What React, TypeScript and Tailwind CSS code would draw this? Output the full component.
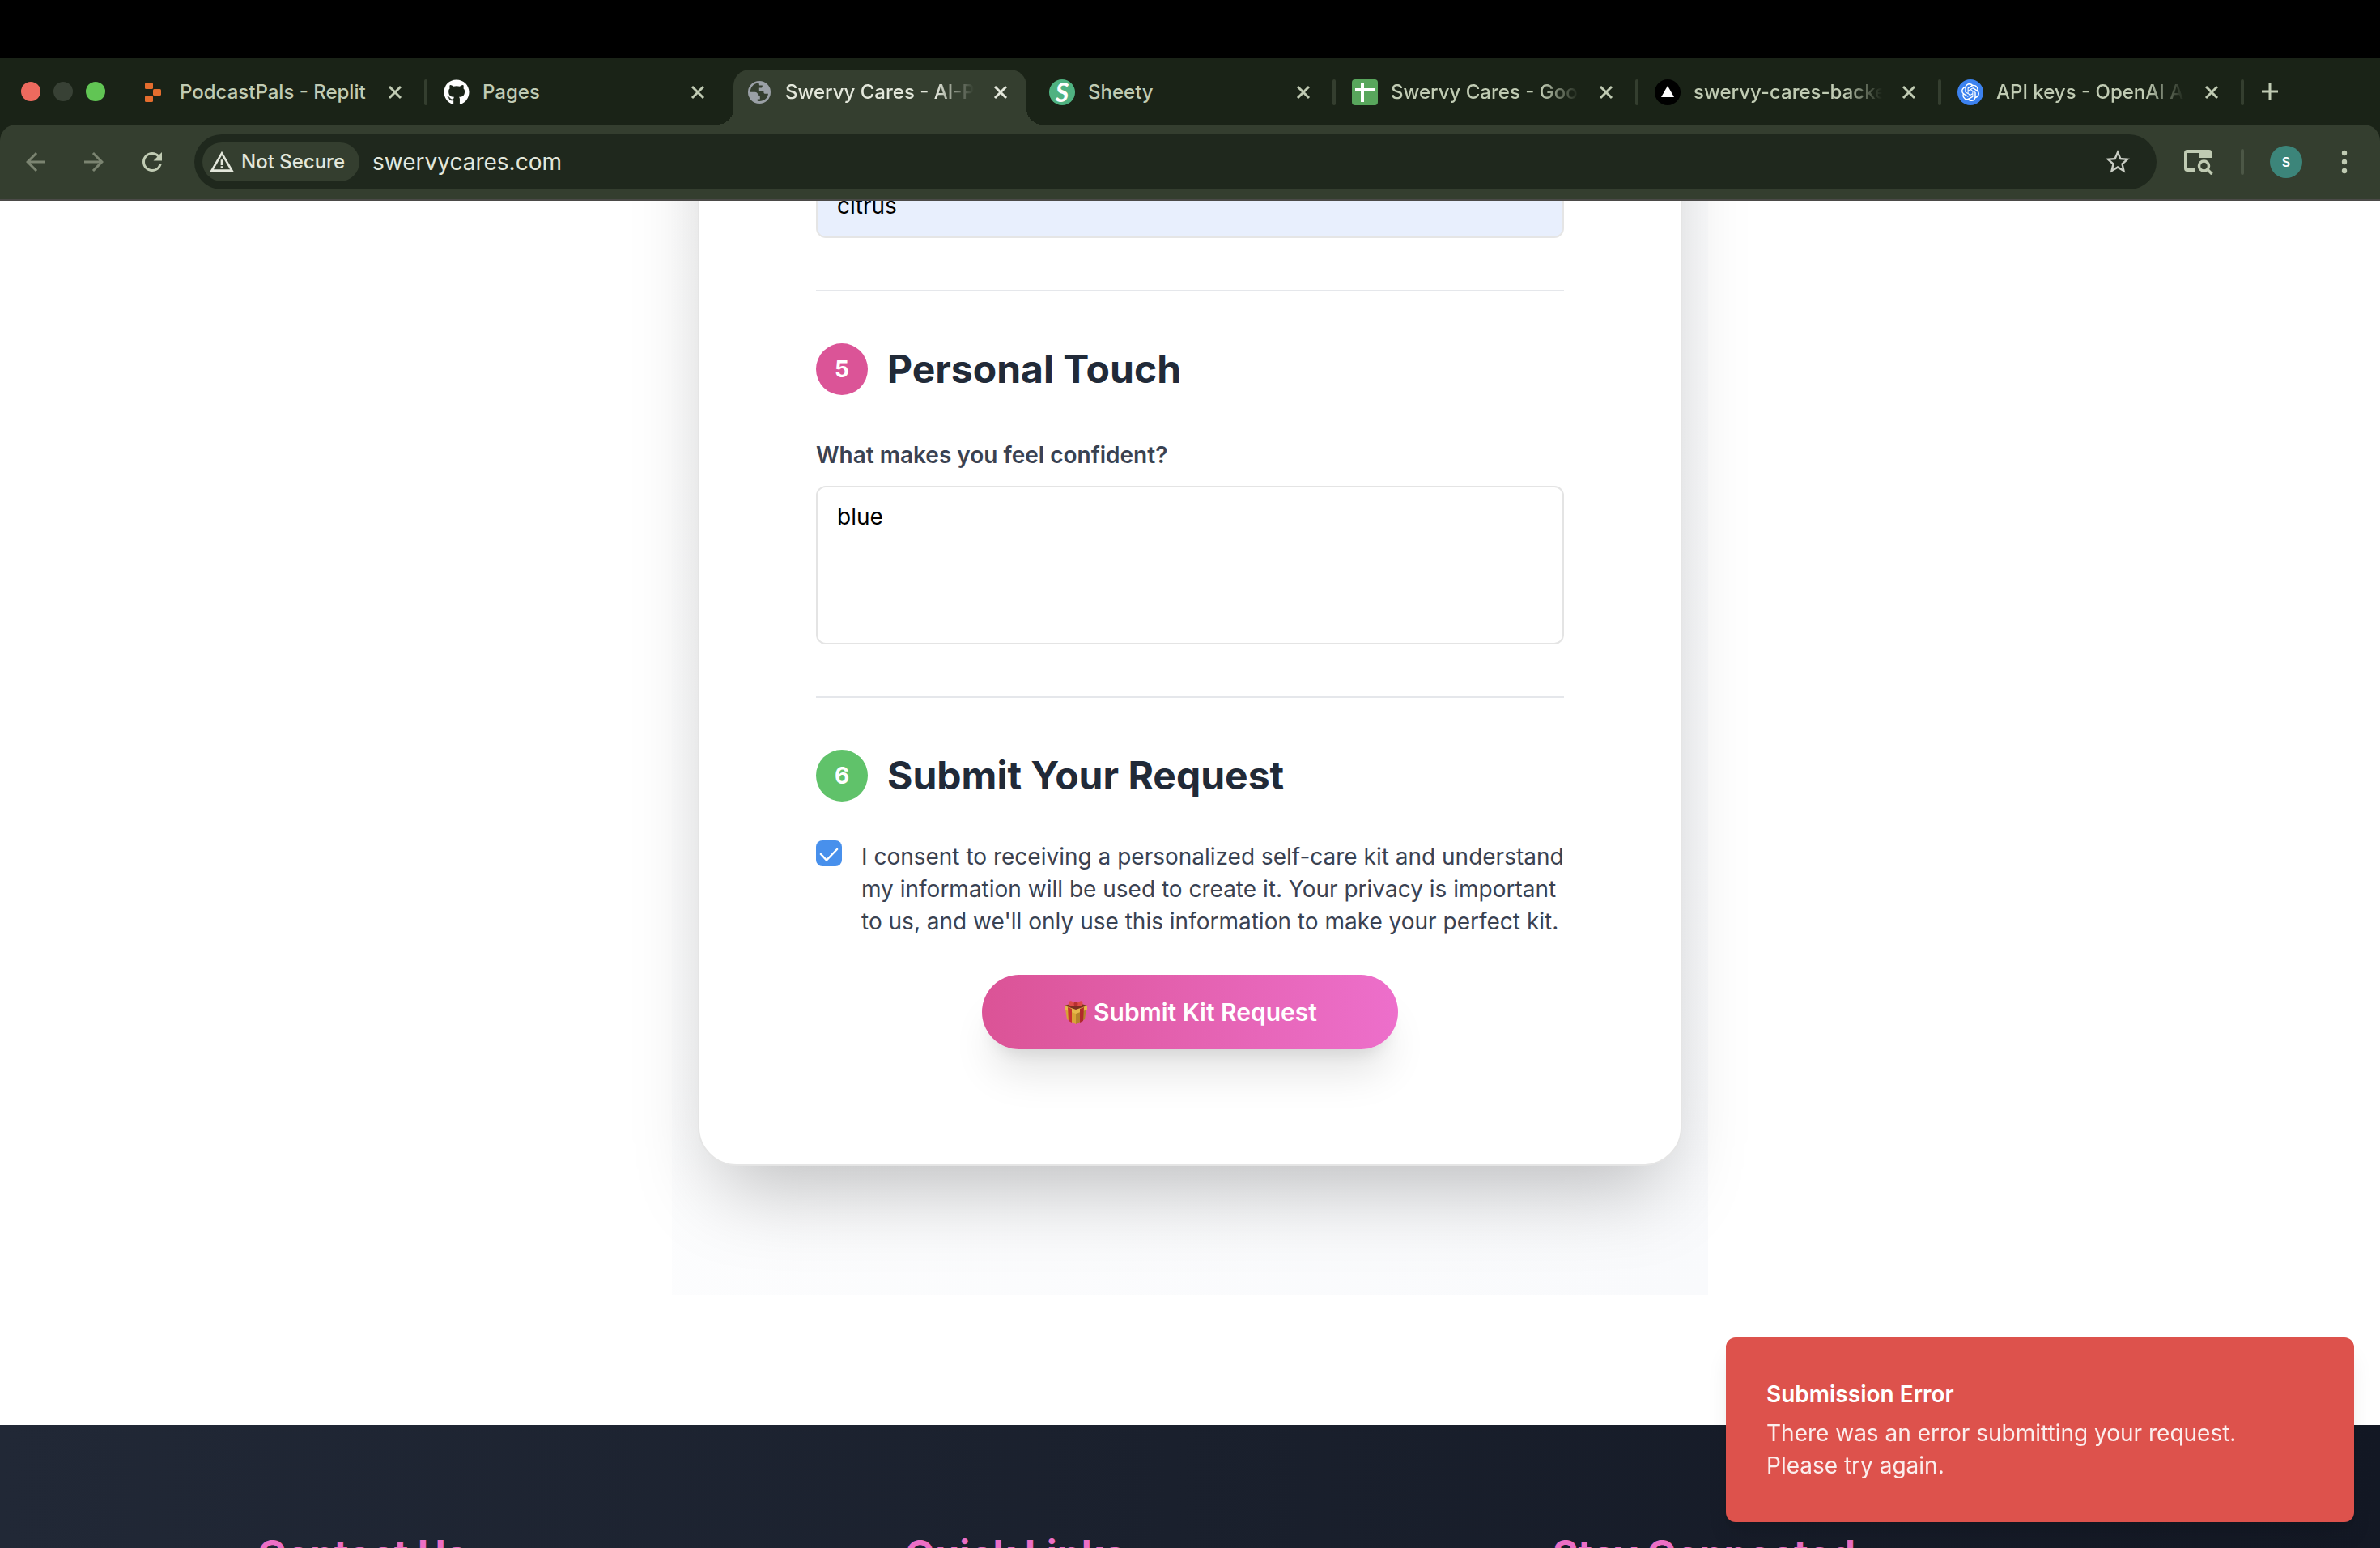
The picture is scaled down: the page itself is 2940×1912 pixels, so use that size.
import type { ReactNode } from 'react';
import { FaGithub } from 'react-icons/fa';
import { SiOpenai } from 'react-icons/si';
import {
  MdArrowBack,
  MdArrowForward,
  MdRefresh,
  MdStarBorder,
  MdWarningAmber,
} from 'react-icons/md';

function ReplitIcon() {
  return (
    <svg viewBox="0 0 32 32" className="size-8" aria-hidden="true">
      <rect x="5" y="4" width="10" height="8" rx="1.5" fill="#e46d2e" />
      <rect x="15" y="12" width="10" height="8" rx="1.5" fill="#e46d2e" />
      <rect x="5" y="20" width="10" height="8" rx="1.5" fill="#e46d2e" />
    </svg>
  );
}

function GlobeIcon() {
  return (
    <svg viewBox="0 0 32 32" className="size-8" aria-hidden="true">
      <circle cx="16" cy="16" r="14" fill="#9aa0a6" />
      <path
        d="M14.500 4.600C8.600 5.400 5 10 4.800 15.800h5.600c2.600 0 3.800 1.200 3.800 3.400v1.600h2.600v3.600h-3v2.400c6.400 1.200 12.400-2.600 13.200-9h-3.400c-1.600 0-2.200-.6-2.200-2v-1.200h-6.600v-4h3.200c1.200 0 1.800-.8 1.800-1.800V7.400h-4.800z"
        fill="#343e2f"
      />
    </svg>
  );
}

function SheetyIcon() {
  return (
    <span className="flex size-8 items-center justify-center rounded-full bg-[#4fb281] font-['Lato',sans-serif] text-[32px] leading-8 font-bold text-white italic">
      S
    </span>
  );
}

function SheetsIcon() {
  return (
    <svg viewBox="0 0 32 32" className="size-8" aria-hidden="true">
      <rect width="32" height="32" rx="4" fill="#58a65c" />
      <path d="M11 4h4v24h-4zM4 11h24v4H4z" fill="#fff" />
    </svg>
  );
}

function VercelIcon() {
  return (
    <svg viewBox="0 0 32 32" className="size-8" aria-hidden="true">
      <circle cx="16" cy="16" r="16" fill="#000" />
      <path d="M16 8l8 14H8z" fill="#fff" />
    </svg>
  );
}

function OpenAIIcon() {
  return (
    <span className="flex size-8 items-center justify-center rounded-full bg-[#3c82f0] text-white">
      <SiOpenai size={22} />
    </span>
  );
}

function CloseGlyph() {
  return (
    <svg viewBox="0 0 24 24" className="size-6" aria-hidden="true">
      <path d="M5 5l14 14M19 5L5 19" stroke="currentColor" strokeWidth="3" />
    </svg>
  );
}

function SearchPanelIcon() {
  return (
    <svg viewBox="0 0 36 32" className="h-8 w-9" fill="none" aria-hidden="true">
      <path d="M14 26H4a2 2 0 0 1-2-2V5a2 2 0 0 1 2-2h18" stroke="#c0cbb3" strokeWidth="4" />
      <path d="M19 1h12a3 3 0 0 1 3 3v7H19z" fill="#c0cbb3" />
      <circle cx="24.500" cy="21" r="6" stroke="#c0cbb3" strokeWidth="3.500" />
      <path d="M28.500 25l6 6" stroke="#c0cbb3" strokeWidth="3.500" />
    </svg>
  );
}

function GiftIcon() {
  return (
    <svg viewBox="0 0 32 32" className="size-8" aria-hidden="true">
      <path d="M3 12l13 5v14L5 25z" fill="#d9a336" />
      <path d="M29 12l-13 5v14l11-6z" fill="#b5832b" />
      <path d="M2 8l14-4 14 4v5l-14 5-14-5z" fill="#e6b84a" />
      <path d="M2 8l14 5 14-5-14-4z" fill="#7c2f22" />
      <path d="M6 10l5 2v17l-4-2z" fill="#c8322f" />
      <path d="M26 10l-5 2v17l4-2z" fill="#b02a2a" />
      <path d="M16 7C13 3 9 1 8 3s0 5 1 6c3 0 5-1 7-2zM16 7c3-4 7-6 8-4s0 5-1 6c-3 0-5-1-7-2z" fill="#dd4b48" />
      <circle cx="16" cy="6" r="2.500" fill="#b93030" />
    </svg>
  );
}

type Tab = {
  title: string;
  icon: ReactNode;
  active?: boolean;
  separator?: boolean;
  faded?: boolean;
};

const tabs: Tab[] = [
  { title: 'PodcastPals - Replit', icon: <ReplitIcon />, separator: true },
  { title: 'Pages', icon: <FaGithub size={32} color="#ffffff" /> },
  { title: 'Swervy Cares - AI-Po', icon: <GlobeIcon />, active: true, faded: true },
  { title: 'Sheety', icon: <SheetyIcon />, separator: true },
  { title: 'Swervy Cares - Goog', icon: <SheetsIcon />, separator: true, faded: true },
  { title: 'swervy-cares-backe', icon: <VercelIcon />, separator: true, faded: true },
  { title: 'API keys - OpenAI AP', icon: <OpenAIIcon />, separator: true, faded: true },
];

function BrowserTab({ title, icon, active, separator, faded }: Tab) {
  return (
    <div
      role="tab"
      aria-selected={!!active}
      className={
        active
          ? 'relative flex h-full max-w-[374px] min-w-0 flex-1 items-center pt-0.5 text-[#e3e7db]'
          : 'relative flex h-full max-w-[374px] min-w-0 flex-1 items-center pt-0.5 text-[#c0cbb3]'
      }
    >
      {active && (
        <div className="absolute top-3.5 right-2 bottom-0 left-1 rounded-t-[20px] bg-[#343e2f] before:absolute before:right-full before:bottom-0 before:size-5 before:bg-[radial-gradient(circle_at_top_left,transparent_20px,#343e2f_20px)] after:absolute after:bottom-0 after:left-full after:size-5 after:bg-[radial-gradient(circle_at_top_right,transparent_20px,#343e2f_20px)]" />
      )}
      <div className="relative flex min-w-0 flex-1 items-center gap-4 pr-6 pl-5">
        <span className="shrink-0">{icon}</span>
        <span
          className={
            faded
              ? 'min-w-0 flex-1 overflow-hidden text-2xl font-medium whitespace-nowrap [mask-image:linear-gradient(to_right,black_78%,transparent_98%)]'
              : 'min-w-0 flex-1 overflow-hidden text-2xl font-medium whitespace-nowrap'
          }
        >
          {title}
        </span>
        <button type="button" aria-label={`Close ${title}`} className="shrink-0">
          <CloseGlyph />
        </button>
      </div>
      <span className={separator ? 'h-8 w-1 rounded-full bg-[#343e2f]' : 'h-8 w-1'} />
    </div>
  );
}

function TabStrip() {
  return (
    <div className="flex h-[82px] items-center bg-[#1a2317]">
      <div className="flex w-[154px] shrink-0 gap-4 pl-[26px]">
        <button type="button" aria-label="Close window" className="size-6 rounded-full bg-[#ed6a5e]" />
        <button type="button" aria-label="Minimize window" className="size-6 rounded-full bg-[#384135]" />
        <button type="button" aria-label="Zoom window" className="size-6 rounded-full bg-[#61c554]" />
      </div>
      <div role="tablist" className="flex h-full min-w-0 flex-1 items-center">
        {tabs.map((tab) => (
          <BrowserTab key={tab.title} {...tab} />
        ))}
        <button type="button" aria-label="New tab" className="ml-5 text-[#c0cbb3]">
          <svg viewBox="0 0 24 24" className="size-6" aria-hidden="true">
            <path d="M12 2v20M2 12h20" stroke="currentColor" strokeWidth="3" />
          </svg>
        </button>
      </div>
    </div>
  );
}

function Toolbar() {
  return (
    <div className="bg-[#1a2317]">
      <div className="flex h-[94px] items-center rounded-t-[20px] border-b-2 border-[#4b4a48] bg-[#343e2f] pr-8 pl-[26px]">
        <div className="flex w-[214px] shrink-0 gap-9">
          <button type="button" aria-label="Back" className="text-[#7b8471]">
            <MdArrowBack size={36} />
          </button>
          <button type="button" aria-label="Forward" className="text-[#7b8471]">
            <MdArrowForward size={36} />
          </button>
          <button type="button" aria-label="Reload" className="text-[#c0cbb3]">
            <MdRefresh size={36} />
          </button>
        </div>
        <div className="flex h-[68px] min-w-0 flex-1 items-center rounded-full bg-[#1f281d] pr-[30px] pl-2.5">
          <button
            type="button"
            className="flex h-12 shrink-0 items-center gap-2 rounded-full bg-[#343e2f] pr-[18px] pl-2 text-2xl font-medium text-[#e3e7db]"
          >
            <MdWarningAmber size={32} />
            Not Secure
          </button>
          <input
            type="text"
            aria-label="Address"
            defaultValue="swervycares.com"
            className="ml-4 min-w-0 flex-1 bg-transparent text-[28px] leading-10 text-[#e3e7db] outline-none"
          />
          <button type="button" aria-label="Bookmark this page" className="text-[#c9cdc4]">
            <MdStarBorder size={36} />
          </button>
        </div>
        <div className="flex shrink-0 items-center pl-[34px]">
          <button type="button" aria-label="Search side panel">
            <SearchPanelIcon />
          </button>
          <span className="ml-[34px] h-8 w-1 rounded-full bg-[#4c5746]" />
          <button
            type="button"
            aria-label="Profile"
            className="ml-8 size-10 rounded-full bg-[#3c857a] text-base font-semibold text-white"
          >
            S
          </button>
          <button type="button" aria-label="Menu" className="ml-10">
            <svg viewBox="0 0 24 32" className="h-8 w-6" fill="#c0cbb3" aria-hidden="true">
              <circle cx="12" cy="5" r="3.200" />
              <circle cx="12" cy="16" r="3.200" />
              <circle cx="12" cy="27" r="3.200" />
            </svg>
          </button>
        </div>
      </div>
    </div>
  );
}

function StepHeading({ step, title, pink }: { step: number; title: string; pink?: boolean }) {
  return (
    <div className="flex items-center gap-6">
      <span
        className={
          pink
            ? 'flex size-16 items-center justify-center rounded-full bg-[#db5497] text-[28px] font-bold text-white'
            : 'flex size-16 items-center justify-center rounded-full bg-[#60c26a] text-[28px] font-bold text-white'
        }
      >
        {step}
      </span>
      <h2 className="text-5xl leading-[64px] font-bold text-[#212a38]">{title}</h2>
    </div>
  );
}

function RequestForm() {
  return (
    <section className="mx-auto -mt-96 w-full max-w-[1280px] bg-linear-to-br from-white to-[#f9fafc] px-8 pb-40">
      <form
        onSubmit={(event) => event.preventDefault()}
        className="rounded-[48px] border-2 border-[#e5e5e5] bg-white px-36 pt-[348px] pb-[142px] shadow-[0_50px_100px_-24px_rgba(0,0,0,0.25)]"
      >
        <input
          type="text"
          aria-label="Favorite scents"
          defaultValue="citrus"
          className="block h-20 w-full rounded-xl border-2 border-[#e5e5e5] bg-[#e8effd] px-6 text-[28px] leading-10 text-black outline-none"
        />
        <hr className="mt-16 mb-16 border-t-2 border-[#e5e7eb]" />
        <StepHeading step={5} title="Personal Touch" pink />
        <label
          htmlFor="confident"
          className="mt-[54px] mb-[18px] block text-[28px] leading-10 font-semibold text-[#3a4252]"
        >
          What makes you feel confident?
        </label>
        <textarea
          id="confident"
          defaultValue="blue"
          className="block h-[196px] w-full resize-none rounded-xl border-2 border-[#e4e4e4] bg-white px-6 py-4 text-[28px] leading-10 text-black outline-none"
        />
        <hr className="mt-16 mb-16 border-t-2 border-[#e5e7eb]" />
        <StepHeading step={6} title="Submit Your Request" />
        <div className="mt-12 flex items-start gap-6">
          <span className="relative size-8 shrink-0">
            <input
              id="consent"
              type="checkbox"
              defaultChecked
              className="block size-8 appearance-none rounded-lg bg-[#4890ec]"
            />
            <svg
              viewBox="0 0 32 32"
              className="pointer-events-none absolute inset-0 size-8"
              fill="none"
              aria-hidden="true"
            >
              <path d="M6 17l7 7.500L26 11" stroke="#fff" strokeWidth="2.500" strokeLinecap="round" />
            </svg>
          </span>
          <label htmlFor="consent" className="flex-1 text-[28px] leading-10 text-[#3a4252]">
            I consent to receiving a personalized self-care kit and understand my information will
            be used to create it. Your privacy is important to us, and we'll only use this
            information to make your perfect kit.
          </label>
        </div>
        <div className="mt-[46px] flex justify-center">
          <button
            type="submit"
            className="flex h-[92px] items-center gap-1.5 rounded-full bg-linear-to-r from-[#db5396] to-[#ed6fcb] px-[100px] text-[30px] font-semibold whitespace-nowrap text-white shadow-[0_40px_50px_-10px_rgba(0,0,0,0.1),0_16px_20px_-12px_rgba(0,0,0,0.1)]"
          >
            <GiftIcon />
            Submit Kit Request
          </button>
        </div>
      </form>
    </section>
  );
}

function Footer() {
  return (
    <footer className="mt-40 bg-linear-to-r from-[#212836] to-[#131824] pt-32 pb-32">
      <div className="mx-auto grid max-w-[2304px] grid-cols-3 gap-24 text-5xl leading-[64px] font-bold text-[#ec6fc5]">
        <h3>Contact Us</h3>
        <h3>Quick Links</h3>
        <h3>Stay Connected</h3>
      </div>
    </footer>
  );
}

function ErrorToast() {
  return (
    <div
      role="alert"
      className="absolute right-8 bottom-8 w-[776px] rounded-xl border-2 border-[#dd524c] bg-[#dd524c] p-12 text-[28px] leading-10 text-white shadow-[0_20px_30px_-6px_rgba(0,0,0,0.1),0_8px_12px_-8px_rgba(0,0,0,0.1)]"
    >
      <p className="font-semibold">Submission Error</p>
      <p className="mt-2 max-w-[620px] opacity-90">
        There was an error submitting your request. Please try again.
      </p>
    </div>
  );
}

export default function App() {
  return (
    <div className="relative flex h-screen flex-col overflow-hidden bg-white font-['Inter',sans-serif]">
      <div className="h-[72px] shrink-0 bg-black" />
      <header className="shrink-0">
        <TabStrip />
        <Toolbar />
      </header>
      <main className="min-h-0 flex-1 overflow-hidden">
        <div className="flow-root">
          <RequestForm />
          <Footer />
        </div>
      </main>
      <ErrorToast />
    </div>
  );
}
